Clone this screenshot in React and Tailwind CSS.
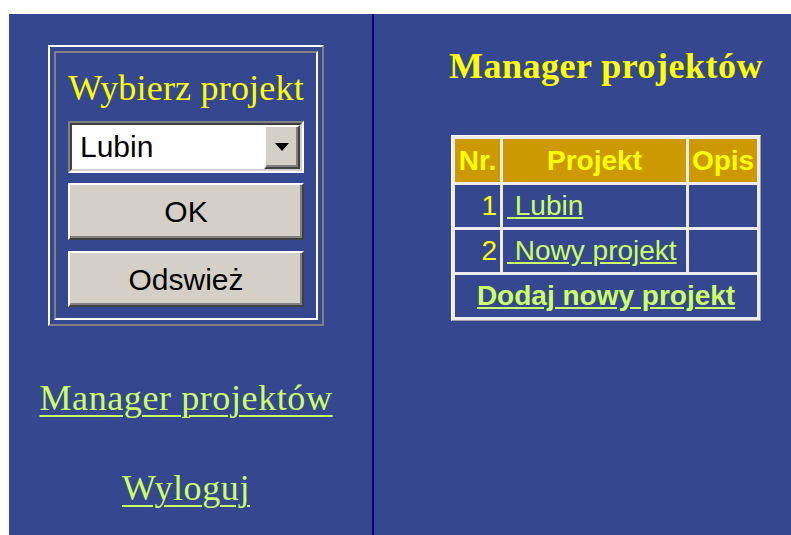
const SERIF = "font-['Liberation_Serif','Times_New_Roman',serif]";
const SANS = "font-['Liberation_Sans',Arial,sans-serif]";

const projects = [
  { id: 1, name: 'Lubin', opis: '' },
  { id: 2, name: 'Nowy projekt', opis: '' },
];

function WinButton({ children, className = '' }) {
  return (
    <button
      type="button"
      className={`w-full border-2 border-t-white border-l-white border-b-[#404040] border-r-[#404040] bg-[#d4d0c8] text-[30px] text-black shadow-[inset_-2px_-2px_0_#808080] ${SANS} ${className}`}
    >
      {children}
    </button>
  );
}

function ProjectPicker() {
  return (
    <div className="w-[276px] border-2 border-t-white border-l-white border-b-[#808080] border-r-[#808080] p-[4px]">
      <div className="flex flex-col border-2 border-t-[#808080] border-l-[#808080] border-b-white border-r-white px-[12px] pt-[15px] pb-[11px]">
        <div className={`whitespace-nowrap text-center text-[36px] leading-[40px] tracking-[0.2px] text-[#ffff00] ${SERIF}`}>
          Wybierz projekt
        </div>
        <div className="mt-[13px] flex h-[52px] border-2 border-t-[#808080] border-l-[#808080] border-b-white border-r-white">
          <div className="flex flex-1 border-2 border-t-[#404040] border-l-[#404040] border-b-[#d4d0c8] border-r-[#d4d0c8] bg-white">
            <span className={`flex-1 pl-[8px] text-[30px] leading-[44px] text-black ${SANS}`}>Lubin</span>
            <div className="flex w-[36px] items-center justify-center border-2 border-t-white border-l-white border-b-[#404040] border-r-[#404040] bg-[#d4d0c8] shadow-[inset_-2px_-2px_0_#808080]">
              <svg width="14" height="8" viewBox="0 0 14 8">
                <path d="M0 0h14L7 8z" fill="#000" />
              </svg>
            </div>
          </div>
        </div>
        <WinButton className="mt-[10px] h-[57px]">OK</WinButton>
        <WinButton className="mt-[11px] h-[56px]">Odswież</WinButton>
      </div>
    </div>
  );
}

function ProjectTable() {
  return (
    <table className={`mt-[49px] table-fixed border-separate border-spacing-[3px] border border-t-white border-l-white border-b-[#a0a0a0] border-r-[#a0a0a0] bg-[#ececec] text-[28px] ${SANS}`}>
      <colgroup>
        <col className="w-[45px]" />
        <col className="w-[183px]" />
        <col className="w-[68px]" />
      </colgroup>
      <thead>
        <tr className="h-[43px] bg-[#cc9900] font-bold text-[#ffff00]">
          <th className="p-0">Nr.</th>
          <th className="p-0">Projekt</th>
          <th className="p-0">Opis</th>
        </tr>
      </thead>
      <tbody>
        {projects.map((p) => (
          <tr key={p.id} className="h-[42px] bg-[#35488f]">
            <td className="p-0 pr-[3px] text-right text-[#ffff00]">{p.id}</td>
            <td className="whitespace-nowrap p-0 pl-[4px]">
              <a href="#" className="text-[#ccff66] underline">
                {'\u00a0'}
                {p.name}
              </a>
            </td>
            <td className="p-0">{p.opis}</td>
          </tr>
        ))}
        <tr className="h-[42px] bg-[#35488f]">
          <td colSpan={3} className="p-0 text-center">
            <a href="#" className="font-bold text-[#ccff66] underline">
              Dodaj nowy projekt
            </a>
          </td>
        </tr>
      </tbody>
    </table>
  );
}

export default function App() {
  return (
    <div className="min-h-[535px] bg-white pt-[14px] pl-[9px]">
      <div className="flex h-[521px] overflow-hidden bg-[#35488f]">
        <div className="flex w-[365px] shrink-0 flex-col items-center border-r-2 border-[#000080] pt-[31px] pr-[9px]">
          <ProjectPicker />
          <a
            href="#"
            className={`mt-[52px] whitespace-nowrap text-[36px] leading-[40px] tracking-[0.6px] text-[#ccff66] underline decoration-2 underline-offset-[5px] ${SERIF}`}
          >
            Manager projektów
          </a>
          <a
            href="#"
            className={`mt-[50px] text-[36px] leading-[40px] tracking-[0.6px] text-[#ccff66] underline decoration-2 underline-offset-[5px] ${SERIF}`}
          >
            Wyloguj
          </a>
        </div>
        <div className="flex-1">
          <div className="flex w-[464px] flex-col items-center pt-[32px]">
            <h1 className={`whitespace-nowrap text-[36px] font-bold leading-[40px] tracking-[0.5px] text-[#ffff00] ${SERIF}`}>
              Manager projektów
            </h1>
            <ProjectTable />
          </div>
        </div>
      </div>
    </div>
  );
}
